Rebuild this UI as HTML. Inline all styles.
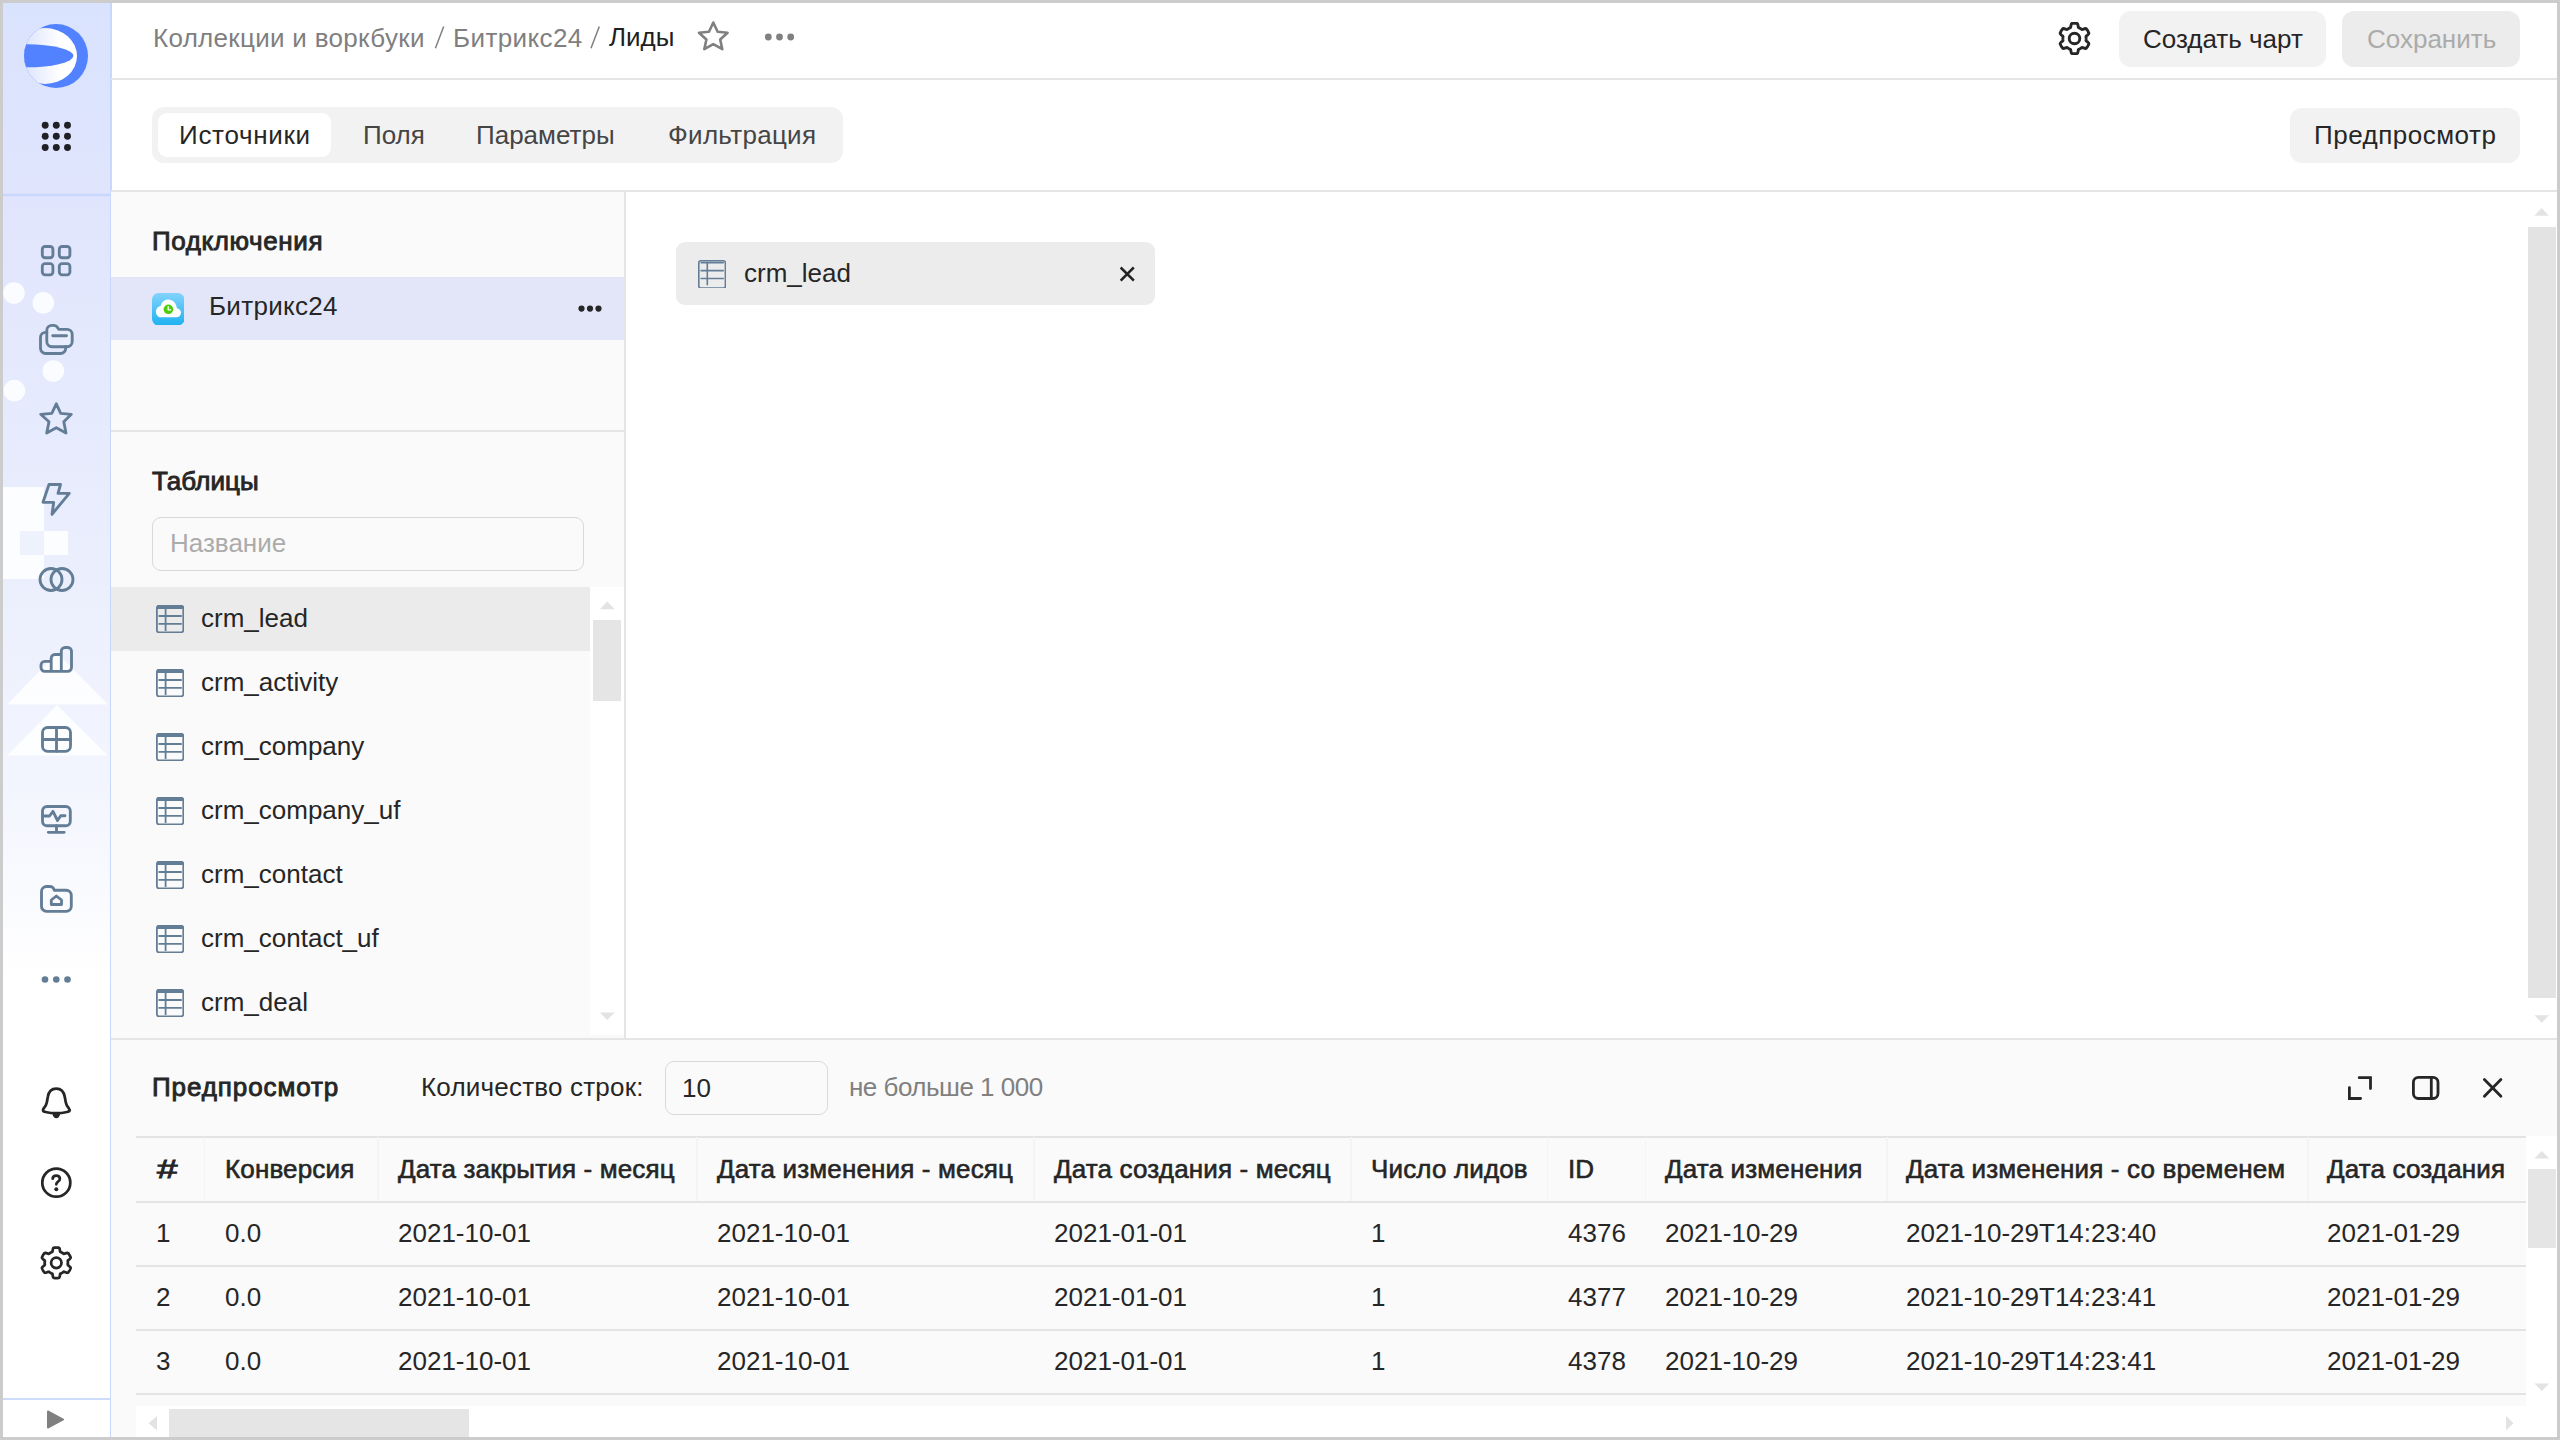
<!DOCTYPE html>
<html><head><meta charset="utf-8">
<style>
*{box-sizing:border-box;margin:0;padding:0}
html,body{width:2560px;height:1440px;overflow:hidden;background:#cccccc}
body{font-family:"Liberation Sans",sans-serif;font-size:26px;color:#262626;position:relative}
.a{position:absolute}
.t{position:absolute;line-height:30px;white-space:pre}
.b{-webkit-text-stroke:0.9px #262626}
.th{-webkit-text-stroke:0.6px #262626;letter-spacing:0.15px}
#app{position:absolute;left:3px;top:3px;width:2554px;height:1434px;background:#fff;overflow:hidden}
</style></head><body>
<div id="app"></div>

<!-- sidebar -->
<div class="a" id="side" style="left:3px;top:3px;width:109px;height:1434px;background:linear-gradient(180deg,#dae3fd 0px,#dde4fd 100px,#e0e5fd 190px,#e5eafd 400px,#ecf0fd 600px,#f3f5fe 780px,#f9fafe 880px,#ffffff 980px);border-right:2px solid #c8d8fc"></div>


<svg class="a" style="left:0;top:0" width="112" height="1440" viewBox="0 0 112 1440">
 <defs>
  <linearGradient id="lw" gradientUnits="userSpaceOnUse" x1="24" x2="60" y1="0" y2="0"><stop offset="0" stop-color="#dbe4fc"/><stop offset="1" stop-color="#ffffff"/></linearGradient>
  <clipPath id="lc"><circle cx="56" cy="56" r="32"/></clipPath>
 </defs>
 <!-- decorations -->
 <g fill="#ffffff" fill-opacity="0.85">
  <circle cx="14" cy="293" r="10.8"/><circle cx="43.3" cy="302.8" r="10.8"/>
  <circle cx="53.3" cy="371" r="10.8"/><circle cx="14.4" cy="390.6" r="10.8"/>
  <path d="M3 487H44V531H68V555H44V579H3Z"/>
  <path d="M7 704.5L57 653L108 704.5Z"/>
  <path d="M7 755.5L57 705L108 755.5Z"/>
 </g>
 <rect x="20" y="531" width="24" height="24" fill="#eef2fd"/>
 <!-- logo -->
 <line x1="3" y1="195" x2="110" y2="195" stroke="#c8d8fc" stroke-width="2.4"/>
 <circle cx="56" cy="56" r="32" fill="#5282ff"/>
 <g clip-path="url(#lc)">
  <ellipse cx="45" cy="56" rx="32" ry="28" fill="url(#lw)"/>
  <ellipse cx="27" cy="55.8" rx="46.4" ry="11.5" fill="#5282ff"/>
 </g>
 <!-- grid dots -->
 <g fill="#202124"><circle cx="45.2" cy="125.2" r="3.45"/><circle cx="56.3" cy="125.2" r="3.45"/><circle cx="67.5" cy="125.2" r="3.45"/><circle cx="45.2" cy="136.3" r="3.45"/><circle cx="56.3" cy="136.3" r="3.45"/><circle cx="67.5" cy="136.3" r="3.45"/><circle cx="45.2" cy="147.5" r="3.45"/><circle cx="56.3" cy="147.5" r="3.45"/><circle cx="67.5" cy="147.5" r="3.45"/></g>
 <g fill="none" stroke="#637d96" stroke-width="2.85" stroke-linejoin="round" stroke-linecap="round">
  <rect x="42.3" y="246.5" width="10.6" height="11.2" rx="2.8"/>
  <rect x="59.3" y="246.5" width="10.6" height="11.2" rx="2.8"/>
  <rect x="42.3" y="263.6" width="10.6" height="11.2" rx="2.8"/>
  <rect x="59.3" y="263.6" width="10.6" height="11.2" rx="2.8"/>
  <path d="M46.8 341.5V330.5A5.2 5.2 0 0 1 52 325.3H53.5C55 325.3 56.4 326 57.3 327.2L58.7 329.3H67A5.2 5.2 0 0 1 72.2 334.5V341.5A5.2 5.2 0 0 1 67 346.7H52A5.2 5.2 0 0 1 46.8 341.5Z" fill="#e8eefd"/>
  <path d="M52.7 335.7H66.5"/>
  <path d="M46.8 332.3H45.7A5.2 5.2 0 0 0 40.5 337.5V348.3A5.2 5.2 0 0 0 45.7 353.5H60.5A5.2 5.2 0 0 0 65.7 348.3V346.7"/>
  <path d="M56.3 403.8L60.7 413.3L71.3 414.3L63.8 421.7L66 433L56.3 427.7L46.7 433L49 421.7L40.7 414.3L51.8 413.3Z"/>
  <path d="M49 484.5H60.5L58 493.3H69.3L52 514.3L53.7 502.3H43Z"/>
  <circle cx="51" cy="579.5" r="11"/><circle cx="62" cy="579.5" r="11"/>
  <path d="M41 665A3.7 3.7 0 0 1 44.7 661.3H51.2V658.2A3.7 3.7 0 0 1 54.9 654.5H61.3V651.2A3.7 3.7 0 0 1 65 647.5H67.8A3.7 3.7 0 0 1 71.5 651.2V667.6A3.7 3.7 0 0 1 67.8 671.3H44.7A3.7 3.7 0 0 1 41 667.6Z M51.2 661.3V671.3 M61.3 654.5V671.3"/>
  <rect x="42.5" y="727.5" width="28" height="23.8" rx="5"/>
  <path d="M56.5 727.5V751.3M42.5 739.5H70.5"/>
  <rect x="42.5" y="806.5" width="27.8" height="19.2" rx="4.5"/>
  <path d="M56.5 825.7V832.3M48.3 832.3H64.2"/>
  <path d="M42.8 816H49.5L53 811.3L57.5 820.5L60.7 815.7H65"/>
  <path d="M41.5 906V891.5A5 5 0 0 1 46.5 886.5H50C51.5 886.5 52.7 887.2 53.5 888.3L54.3 890.2H66.3A5 5 0 0 1 71.3 895.2V906.3A5 5 0 0 1 66.3 911.3H46.5A5 5 0 0 1 41.5 906Z"/>
  <path d="M51.3 904.5V900L56.4 896L61.5 900V904.5Z"/>
 </g>
 <g fill="#637d96"><circle cx="45" cy="979.5" r="3.3"/><circle cx="56.3" cy="979.5" r="3.3"/><circle cx="67.5" cy="979.5" r="3.3"/></g>
 <g fill="none" stroke="#262626" stroke-width="2.75" stroke-linejoin="round" stroke-linecap="round">
  <path d="M56.3 1088.5C51.5 1088.5 48.5 1092 47.8 1097L46.8 1102.5C46.3 1105 45 1107 43.8 1108.3C42 1110.3 43 1111.5 45.5 1112C49 1112.8 52.5 1113.2 56.3 1113.2C60 1113.2 63.5 1112.8 67 1112C69.5 1111.5 70.5 1110.3 68.8 1108.3C67.6 1107 66.3 1105 65.8 1102.5L64.8 1097C64 1092 61 1088.5 56.3 1088.5Z"/>
  <circle cx="56.3" cy="1182.7" r="14"/>
  <path d="M52.7 1178.7C52.7 1176.7 54.3 1175.5 56.3 1175.5C58.3 1175.5 59.9 1176.8 59.9 1178.7C59.9 1180.3 58.9 1181 57.8 1181.8C56.8 1182.5 56.3 1183 56.3 1184.3"/>
  <path d="M56.30 1247.50 L56.83 1247.51 L57.37 1247.54 L57.90 1247.58 L58.43 1247.65 L58.95 1247.75 L59.39 1248.24 L59.70 1249.15 L59.90 1250.23 L60.07 1251.21 L60.29 1251.84 L60.65 1252.04 L61.02 1252.20 L61.39 1252.37 L61.75 1252.56 L62.10 1252.75 L62.45 1252.96 L62.79 1253.18 L63.12 1253.42 L63.44 1253.66 L63.80 1253.86 L64.45 1253.74 L65.38 1253.40 L66.42 1253.03 L67.36 1252.84 L68.01 1252.98 L68.36 1253.38 L68.68 1253.81 L68.98 1254.24 L69.28 1254.69 L69.55 1255.15 L69.81 1255.62 L70.05 1256.09 L70.28 1256.58 L70.49 1257.07 L70.66 1257.57 L70.46 1258.20 L69.82 1258.92 L68.99 1259.64 L68.22 1260.27 L67.79 1260.77 L67.79 1261.19 L67.84 1261.59 L67.87 1261.99 L67.89 1262.40 L67.90 1262.80 L67.89 1263.20 L67.87 1263.61 L67.84 1264.01 L67.79 1264.41 L67.79 1264.83 L68.22 1265.33 L68.99 1265.96 L69.82 1266.68 L70.46 1267.40 L70.66 1268.03 L70.49 1268.53 L70.28 1269.02 L70.05 1269.51 L69.81 1269.98 L69.55 1270.45 L69.28 1270.91 L68.98 1271.36 L68.68 1271.79 L68.36 1272.22 L68.01 1272.62 L67.36 1272.76 L66.42 1272.57 L65.38 1272.20 L64.45 1271.86 L63.80 1271.74 L63.44 1271.94 L63.12 1272.18 L62.79 1272.42 L62.45 1272.64 L62.10 1272.85 L61.75 1273.04 L61.39 1273.23 L61.02 1273.40 L60.65 1273.56 L60.29 1273.76 L60.07 1274.39 L59.90 1275.37 L59.70 1276.45 L59.39 1277.36 L58.95 1277.85 L58.43 1277.95 L57.90 1278.02 L57.37 1278.06 L56.83 1278.09 L56.30 1278.10 L55.77 1278.09 L55.23 1278.06 L54.70 1278.02 L54.17 1277.95 L53.65 1277.85 L53.21 1277.36 L52.90 1276.45 L52.70 1275.37 L52.53 1274.39 L52.31 1273.76 L51.95 1273.56 L51.58 1273.40 L51.21 1273.23 L50.85 1273.04 L50.50 1272.85 L50.15 1272.64 L49.81 1272.42 L49.48 1272.18 L49.16 1271.94 L48.80 1271.74 L48.15 1271.86 L47.22 1272.20 L46.18 1272.57 L45.24 1272.76 L44.59 1272.62 L44.24 1272.22 L43.92 1271.79 L43.62 1271.36 L43.32 1270.91 L43.05 1270.45 L42.79 1269.98 L42.55 1269.51 L42.32 1269.02 L42.11 1268.53 L41.94 1268.03 L42.14 1267.40 L42.78 1266.68 L43.61 1265.96 L44.38 1265.33 L44.81 1264.83 L44.81 1264.41 L44.76 1264.01 L44.73 1263.61 L44.71 1263.20 L44.70 1262.80 L44.71 1262.40 L44.73 1261.99 L44.76 1261.59 L44.81 1261.19 L44.81 1260.77 L44.38 1260.27 L43.61 1259.64 L42.78 1258.92 L42.14 1258.20 L41.94 1257.57 L42.11 1257.07 L42.32 1256.58 L42.55 1256.09 L42.79 1255.62 L43.05 1255.15 L43.32 1254.69 L43.62 1254.24 L43.92 1253.81 L44.24 1253.38 L44.59 1252.98 L45.24 1252.84 L46.18 1253.03 L47.22 1253.40 L48.15 1253.74 L48.80 1253.86 L49.16 1253.66 L49.48 1253.42 L49.81 1253.18 L50.15 1252.96 L50.50 1252.75 L50.85 1252.56 L51.21 1252.37 L51.58 1252.20 L51.95 1252.04 L52.31 1251.84 L52.53 1251.21 L52.70 1250.23 L52.90 1249.15 L53.21 1248.24 L53.65 1247.75 L54.17 1247.65 L54.70 1247.58 L55.23 1247.54 L55.77 1247.51Z"/>
  <circle cx="56.3" cy="1262.8" r="5.2"/>
 </g>
 <path d="M52.3 1113.5H60.3C59.8 1116.5 58.3 1118.2 56.3 1118.2C54.3 1118.2 52.8 1116.5 52.3 1113.5Z" fill="#262626"/>
 <circle cx="56.3" cy="1189.3" r="2" fill="#262626"/>
 <line x1="3" y1="1399" x2="111" y2="1399" stroke="#cddcfb" stroke-width="2"/>
 <path d="M47 1411.5V1427.5C47 1428.3 47.6 1428.7 48.3 1428.4L63.6 1420.3C64.3 1419.9 64.3 1419.1 63.6 1418.7L48.3 1410.6C47.6 1410.3 47 1410.7 47 1411.5Z" fill="#808080"/>
</svg>

<!-- header -->
<div class="a" style="left:111px;top:78px;width:2446px;height:2px;background:#e5e5e5"></div>
<div class="t" style="left:153px;top:23px;color:#7f7f7f;letter-spacing:0.3px">Коллекции и воркбуки</div>
<svg class="a" style="left:420px;top:20px" width="200" height="34" viewBox="420 20 200 34"><path d="M443.7 26.6L435.4 48.2M599.3 26.6L591 48.2" stroke="#7f7f7f" stroke-width="1.5"/></svg>
<div class="t" style="left:453px;top:23px;color:#7f7f7f;letter-spacing:0.4px">Битрикс24</div>

<div class="t" style="left:609px;top:22px;color:#1f1f1f">Лиды</div>

<div class="a" style="left:2119px;top:11px;width:207px;height:56px;border-radius:12px;background:#f2f2f2"></div>
<div class="t" style="left:2143px;top:24px">Создать чарт</div>
<div class="a" style="left:2342px;top:11px;width:178px;height:56px;border-radius:12px;background:#ececec"></div>
<div class="t" style="left:2367px;top:24px;color:#ababab">Сохранить</div>


<svg class="a" style="left:690px;top:14px" width="110" height="46" viewBox="690 14 110 46">
 <path d="M713.3 22.5L717.6 31.8L727.6 32.7L720.2 39.5L722.3 49.2L713.3 44.2L704.3 49.2L706.4 39.5L699 32.7L709 31.8Z" fill="none" stroke="#808080" stroke-width="2.6" stroke-linejoin="round"/>
 <circle cx="768.3" cy="37" r="3.4" fill="#808080"/><circle cx="779.5" cy="37" r="3.4" fill="#808080"/><circle cx="790.7" cy="37" r="3.4" fill="#808080"/>
</svg>
<svg class="a" style="left:2057.5px;top:22.3px" width="33" height="33" viewBox="0 0 33 33">
 <path d="M16.50 1.20 L17.03 1.21 L17.57 1.24 L18.10 1.28 L18.63 1.35 L19.15 1.45 L19.59 1.94 L19.90 2.85 L20.10 3.93 L20.27 4.91 L20.49 5.54 L20.85 5.74 L21.22 5.90 L21.59 6.07 L21.95 6.26 L22.30 6.45 L22.65 6.66 L22.99 6.88 L23.32 7.12 L23.64 7.36 L24.00 7.56 L24.65 7.44 L25.58 7.10 L26.62 6.73 L27.56 6.54 L28.21 6.68 L28.56 7.08 L28.88 7.51 L29.18 7.94 L29.48 8.39 L29.75 8.85 L30.01 9.32 L30.25 9.79 L30.48 10.28 L30.69 10.77 L30.86 11.27 L30.66 11.90 L30.02 12.62 L29.19 13.34 L28.42 13.97 L27.99 14.47 L27.99 14.89 L28.04 15.29 L28.07 15.69 L28.09 16.10 L28.10 16.50 L28.09 16.90 L28.07 17.31 L28.04 17.71 L27.99 18.11 L27.99 18.53 L28.42 19.03 L29.19 19.66 L30.02 20.38 L30.66 21.10 L30.86 21.73 L30.69 22.23 L30.48 22.72 L30.25 23.21 L30.01 23.68 L29.75 24.15 L29.48 24.61 L29.18 25.06 L28.88 25.49 L28.56 25.92 L28.21 26.32 L27.56 26.46 L26.62 26.27 L25.58 25.90 L24.65 25.56 L24.00 25.44 L23.64 25.64 L23.32 25.88 L22.99 26.12 L22.65 26.34 L22.30 26.55 L21.95 26.74 L21.59 26.93 L21.22 27.10 L20.85 27.26 L20.49 27.46 L20.27 28.09 L20.10 29.07 L19.90 30.15 L19.59 31.06 L19.15 31.55 L18.63 31.65 L18.10 31.72 L17.57 31.76 L17.03 31.79 L16.50 31.80 L15.97 31.79 L15.43 31.76 L14.90 31.72 L14.37 31.65 L13.85 31.55 L13.41 31.06 L13.10 30.15 L12.90 29.07 L12.73 28.09 L12.51 27.46 L12.15 27.26 L11.78 27.10 L11.41 26.93 L11.05 26.74 L10.70 26.55 L10.35 26.34 L10.01 26.12 L9.68 25.88 L9.36 25.64 L9.00 25.44 L8.35 25.56 L7.42 25.90 L6.38 26.27 L5.44 26.46 L4.79 26.32 L4.44 25.92 L4.12 25.49 L3.82 25.06 L3.52 24.61 L3.25 24.15 L2.99 23.68 L2.75 23.21 L2.52 22.72 L2.31 22.23 L2.14 21.73 L2.34 21.10 L2.98 20.38 L3.81 19.66 L4.58 19.03 L5.01 18.53 L5.01 18.11 L4.96 17.71 L4.93 17.31 L4.91 16.90 L4.90 16.50 L4.91 16.10 L4.93 15.69 L4.96 15.29 L5.01 14.89 L5.01 14.47 L4.58 13.97 L3.81 13.34 L2.98 12.62 L2.34 11.90 L2.14 11.27 L2.31 10.77 L2.52 10.28 L2.75 9.79 L2.99 9.32 L3.25 8.85 L3.52 8.39 L3.82 7.94 L4.12 7.51 L4.44 7.08 L4.79 6.68 L5.44 6.54 L6.38 6.73 L7.42 7.10 L8.35 7.44 L9.00 7.56 L9.36 7.36 L9.68 7.12 L10.01 6.88 L10.35 6.66 L10.70 6.45 L11.05 6.26 L11.41 6.07 L11.78 5.90 L12.15 5.74 L12.51 5.54 L12.73 4.91 L12.90 3.93 L13.10 2.85 L13.41 1.94 L13.85 1.45 L14.37 1.35 L14.90 1.28 L15.43 1.24 L15.97 1.21Z" fill="none" stroke="#262626" stroke-width="2.9" stroke-linejoin="round"/>
 <circle cx="16.5" cy="16.5" r="5.3" fill="none" stroke="#262626" stroke-width="2.9"/>
</svg>

<!-- tabs -->
<div class="a" style="left:111px;top:190px;width:2446px;height:2px;background:#e5e5e5"></div>
<div class="a" style="left:152px;top:107px;width:691px;height:56px;border-radius:12px;background:#f2f2f2"></div>
<div class="a" style="left:158px;top:113px;width:173px;height:44px;border-radius:9px;background:#fff"></div>
<div class="t" style="left:179px;top:120px;letter-spacing:0.7px">Источники</div>
<div class="t" style="left:363px;top:120px;color:#454545">Поля</div>
<div class="t" style="left:476px;top:120px;color:#454545">Параметры</div>
<div class="t" style="left:668px;top:120px;color:#454545;letter-spacing:0.3px">Фильтрация</div>
<div class="a" style="left:2290px;top:108px;width:230px;height:55px;border-radius:12px;background:#f2f2f2"></div>
<div class="t" style="left:2314px;top:120px;letter-spacing:0.5px">Предпросмотр</div>

<!-- left panel -->
<div class="a" style="left:111px;top:192px;width:515px;height:847px;background:#fafafa;border-right:2px solid #e5e5e5"></div>
<div class="t b" style="left:152px;top:226px;letter-spacing:0.6px">Подключения</div>
<div class="a" style="left:111px;top:277px;width:513px;height:63px;background:#e2e6f8"></div>
<div class="t" style="left:209px;top:291px;letter-spacing:0.3px">Битрикс24</div>
<svg class="a" style="left:152px;top:292.5px" width="32.4" height="32.4" viewBox="0 0 32.4 32.4">
 <defs><linearGradient id="bx" x1="0" y1="0" x2="0" y2="1"><stop offset="0" stop-color="#82d3fb"/><stop offset="1" stop-color="#1fb2f2"/></linearGradient></defs>
 <rect x="0" y="0" width="32.4" height="32.4" rx="6.5" fill="url(#bx)"/>
 <path d="M9 24.3H24.5C27 24.3 29 22.3 29 19.8C29 17.4 27.2 15.5 24.9 15.3C24.4 10.3 20.8 6.5 16.4 6.5C12.6 6.5 9.5 9.2 8.6 13C5.9 13.4 4 15.9 4 19C4 21.9 6.2 24.3 9 24.3Z" fill="#fff"/>
 <circle cx="16.4" cy="16.3" r="4.8" fill="#4fcd0c"/>
 <path d="M16.2 13.6V16.8H18.6" fill="none" stroke="#fff" stroke-width="1.3" stroke-linecap="round"/>
</svg>
<svg class="a" style="left:576px;top:302px" width="28" height="12" viewBox="576 302 28 12">
 <circle cx="581.5" cy="308.6" r="3.1" fill="#262626"/><circle cx="590" cy="308.6" r="3.1" fill="#262626"/><circle cx="598.5" cy="308.6" r="3.1" fill="#262626"/>
</svg>

<div class="a" style="left:111px;top:430px;width:513px;height:2px;background:#e5e5e5"></div>
<div class="t b" style="left:152px;top:466px;letter-spacing:0.1px">Таблицы</div>
<div class="a" style="left:152px;top:517px;width:432px;height:54px;border-radius:9px;border:1.5px solid #d9d9d9;background:#fafafa"></div>
<div class="t" style="left:170px;top:528px;color:#ababab">Название</div>
<div class="a" style="left:111px;top:587px;width:479px;height:64px;background:#ebebeb"></div>
<div class="a" style="left:590px;top:587px;width:34px;height:448px;background:#fff"></div>
<div class="a" style="left:593px;top:620px;width:28px;height:81px;background:#e5e5e5"></div>

<svg class="a" style="left:155.7px;top:605px" width="28" height="28" viewBox="0 0 28 28"><g fill="none" stroke="#637d96" stroke-width="1.8"><rect x="0.9" y="0.9" width="26.4" height="26.4" rx="2"/><path d="M2.5 11H25.8M2.5 18.9H25.8M9.6 3V26"/></g><rect x="1" y="0.3" width="26.2" height="3.6" rx="1" fill="#637d96"/></svg>
<div class="t" style="left:201px;top:603px">crm_lead</div>
<svg class="a" style="left:155.7px;top:669px" width="28" height="28" viewBox="0 0 28 28"><g fill="none" stroke="#637d96" stroke-width="1.8"><rect x="0.9" y="0.9" width="26.4" height="26.4" rx="2"/><path d="M2.5 11H25.8M2.5 18.9H25.8M9.6 3V26"/></g><rect x="1" y="0.3" width="26.2" height="3.6" rx="1" fill="#637d96"/></svg>
<div class="t" style="left:201px;top:667px">crm_activity</div>
<svg class="a" style="left:155.7px;top:733px" width="28" height="28" viewBox="0 0 28 28"><g fill="none" stroke="#637d96" stroke-width="1.8"><rect x="0.9" y="0.9" width="26.4" height="26.4" rx="2"/><path d="M2.5 11H25.8M2.5 18.9H25.8M9.6 3V26"/></g><rect x="1" y="0.3" width="26.2" height="3.6" rx="1" fill="#637d96"/></svg>
<div class="t" style="left:201px;top:731px">crm_company</div>
<svg class="a" style="left:155.7px;top:797px" width="28" height="28" viewBox="0 0 28 28"><g fill="none" stroke="#637d96" stroke-width="1.8"><rect x="0.9" y="0.9" width="26.4" height="26.4" rx="2"/><path d="M2.5 11H25.8M2.5 18.9H25.8M9.6 3V26"/></g><rect x="1" y="0.3" width="26.2" height="3.6" rx="1" fill="#637d96"/></svg>
<div class="t" style="left:201px;top:795px">crm_company_uf</div>
<svg class="a" style="left:155.7px;top:861px" width="28" height="28" viewBox="0 0 28 28"><g fill="none" stroke="#637d96" stroke-width="1.8"><rect x="0.9" y="0.9" width="26.4" height="26.4" rx="2"/><path d="M2.5 11H25.8M2.5 18.9H25.8M9.6 3V26"/></g><rect x="1" y="0.3" width="26.2" height="3.6" rx="1" fill="#637d96"/></svg>
<div class="t" style="left:201px;top:859px">crm_contact</div>
<svg class="a" style="left:155.7px;top:925px" width="28" height="28" viewBox="0 0 28 28"><g fill="none" stroke="#637d96" stroke-width="1.8"><rect x="0.9" y="0.9" width="26.4" height="26.4" rx="2"/><path d="M2.5 11H25.8M2.5 18.9H25.8M9.6 3V26"/></g><rect x="1" y="0.3" width="26.2" height="3.6" rx="1" fill="#637d96"/></svg>
<div class="t" style="left:201px;top:923px">crm_contact_uf</div>
<svg class="a" style="left:155.7px;top:989px" width="28" height="28" viewBox="0 0 28 28"><g fill="none" stroke="#637d96" stroke-width="1.8"><rect x="0.9" y="0.9" width="26.4" height="26.4" rx="2"/><path d="M2.5 11H25.8M2.5 18.9H25.8M9.6 3V26"/></g><rect x="1" y="0.3" width="26.2" height="3.6" rx="1" fill="#637d96"/></svg>
<div class="t" style="left:201px;top:987px">crm_deal</div>

<!-- right panel -->
<div class="a" style="left:676px;top:242px;width:479px;height:63px;border-radius:9px;background:#ececec"></div>
<div class="t" style="left:744px;top:258px">crm_lead</div>
<svg class="a" style="left:698px;top:259.5px" width="28" height="28" viewBox="0 0 28 28"><g fill="none" stroke="#637d96" stroke-width="1.6"><rect x="0.8" y="0.8" width="26.6" height="27.2" rx="2"/><path d="M2.5 2.6H25.8M2.5 10.6H25.8M2.5 18.5H25.8M9.3 2.6V25.2"/></g></svg>
<svg class="a" style="left:1116px;top:263px" width="22" height="22" viewBox="0 0 22 22"><path d="M5.6 5.4L16.9 16.7M16.9 5.4L5.6 16.7" stroke="#222" stroke-width="2.6" stroke-linecap="square"/></svg>


<!-- preview -->
<div class="a" style="left:111px;top:1038px;width:2446px;height:399px;background:#fafafa;border-top:2px solid #e5e5e5"></div>
<div class="t b" style="left:152px;top:1072px;letter-spacing:0.9px">Предпросмотр</div>
<div class="t" style="left:421px;top:1072px;letter-spacing:0.2px">Количество строк:</div>
<div class="a" style="left:665px;top:1061px;width:163px;height:54px;border-radius:9px;border:1.5px solid #d9d9d9"></div>
<div class="t" style="left:682px;top:1073px">10</div>
<div class="t" style="left:849px;top:1072px;color:#808080;letter-spacing:-0.5px">не больше 1 000</div>


<div class="a" style="left:136px;top:1136px;width:2390px;height:270px;background:#fafafa"></div>
<div class="a" style="left:136px;top:1136px;width:2390px;height:1.5px;background:#e3e3e3"></div>
<div class="a" style="left:203.5px;top:1137px;width:1.5px;height:65px;background:#f4f4f4"></div><div class="a" style="left:377px;top:1137px;width:1.5px;height:65px;background:#f4f4f4"></div><div class="a" style="left:696px;top:1137px;width:1.5px;height:65px;background:#f4f4f4"></div><div class="a" style="left:1033px;top:1137px;width:1.5px;height:65px;background:#f4f4f4"></div><div class="a" style="left:1350px;top:1137px;width:1.5px;height:65px;background:#f4f4f4"></div><div class="a" style="left:1546.5px;top:1137px;width:1.5px;height:65px;background:#f4f4f4"></div><div class="a" style="left:1644.5px;top:1137px;width:1.5px;height:65px;background:#f4f4f4"></div><div class="a" style="left:1886px;top:1137px;width:1.5px;height:65px;background:#f4f4f4"></div><div class="a" style="left:2307px;top:1137px;width:1.5px;height:65px;background:#f4f4f4"></div>
<div class="a" style="left:136px;top:1201.4px;width:2390px;height:1.6px;background:#e4e4e4"></div>
<div class="a" style="left:136px;top:1265.4px;width:2390px;height:1.6px;background:#e4e4e4"></div>
<div class="a" style="left:136px;top:1329.4px;width:2390px;height:1.6px;background:#e4e4e4"></div>
<div class="a" style="left:136px;top:1393.4px;width:2390px;height:1.6px;background:#e4e4e4"></div>
<div class="a" style="left:2526px;top:1136px;width:31px;height:301px;background:#fff"></div>
<div class="a" style="left:136px;top:1406px;width:2390px;height:31px;background:#fff"></div>
<div class="a" style="left:169px;top:1409px;width:300px;height:28px;background:#e5e5e5"></div>
<div class="a" style="left:2528px;top:1169px;width:28px;height:79px;background:#e5e5e5"></div>
<div class="t th" style="left:157px;top:1154px;font-size:26px;-webkit-text-stroke:0.9px #262626;transform:scaleX(1.42);transform-origin:0 0">#</div>
<div class="t th" style="left:225px;top:1154px">Конверсия</div>
<div class="t th" style="left:398px;top:1154px">Дата закрытия - месяц</div>
<div class="t th" style="left:717px;top:1154px">Дата изменения - месяц</div>
<div class="t th" style="left:1054px;top:1154px">Дата создания - месяц</div>
<div class="t th" style="left:1371px;top:1154px">Число лидов</div>
<div class="t th" style="left:1568px;top:1154px">ID</div>
<div class="t th" style="left:1665px;top:1154px">Дата изменения</div>
<div class="t th" style="left:1906px;top:1154px">Дата изменения - со временем</div>
<div class="t th" style="left:2327px;top:1154px">Дата создания</div>
<div class="t" style="left:156px;top:1218px">1</div>
<div class="t" style="left:225px;top:1218px">0.0</div>
<div class="t" style="left:398px;top:1218px">2021-10-01</div>
<div class="t" style="left:717px;top:1218px">2021-10-01</div>
<div class="t" style="left:1054px;top:1218px">2021-01-01</div>
<div class="t" style="left:1371px;top:1218px">1</div>
<div class="t" style="left:1568px;top:1218px">4376</div>
<div class="t" style="left:1665px;top:1218px">2021-10-29</div>
<div class="t" style="left:1906px;top:1218px">2021-10-29T14:23:40</div>
<div class="t" style="left:2327px;top:1218px">2021-01-29</div>
<div class="t" style="left:156px;top:1282px">2</div>
<div class="t" style="left:225px;top:1282px">0.0</div>
<div class="t" style="left:398px;top:1282px">2021-10-01</div>
<div class="t" style="left:717px;top:1282px">2021-10-01</div>
<div class="t" style="left:1054px;top:1282px">2021-01-01</div>
<div class="t" style="left:1371px;top:1282px">1</div>
<div class="t" style="left:1568px;top:1282px">4377</div>
<div class="t" style="left:1665px;top:1282px">2021-10-29</div>
<div class="t" style="left:1906px;top:1282px">2021-10-29T14:23:41</div>
<div class="t" style="left:2327px;top:1282px">2021-01-29</div>
<div class="t" style="left:156px;top:1346px">3</div>
<div class="t" style="left:225px;top:1346px">0.0</div>
<div class="t" style="left:398px;top:1346px">2021-10-01</div>
<div class="t" style="left:717px;top:1346px">2021-10-01</div>
<div class="t" style="left:1054px;top:1346px">2021-01-01</div>
<div class="t" style="left:1371px;top:1346px">1</div>
<div class="t" style="left:1568px;top:1346px">4378</div>
<div class="t" style="left:1665px;top:1346px">2021-10-29</div>
<div class="t" style="left:1906px;top:1346px">2021-10-29T14:23:41</div>
<div class="t" style="left:2327px;top:1346px">2021-01-29</div>

<!-- scrollbars -->
<svg class="a" style="left:0;top:0" width="2560" height="1440" viewBox="0 0 2560 1440">
 <g fill="#e3e3e3">
  <path d="M599.9 609.2L607.2 601.6L614.8 609.2Z"/>
  <path d="M599.9 1012.5L607.2 1020L614.8 1012.5Z"/>
  <path d="M2534.3 215.8L2541.6 208L2548.9 215.8Z"/>
  <path d="M2534.4 1015.2L2541.8 1022.8L2549.2 1015.2Z"/>
  <rect x="2528" y="227" width="28" height="771"/>
  <path d="M2534.4 1158.5L2541.8 1151L2549.2 1158.5Z"/>
  <path d="M2534.4 1383.5L2541.8 1391L2549.2 1383.5Z"/>
  <path d="M157 1416L148.5 1423.3L157 1430.6Z"/>
  <path d="M2506 1416L2513.5 1423.3L2506 1430.6Z"/>
 </g>
 <g fill="none" stroke="#262626" stroke-width="2.8" stroke-linecap="round">
  <path d="M2359.2 1077.7H2370.5V1088.6M2349.4 1087.6V1098.5H2360.6"/>
  <rect x="2413.4" y="1077.4" width="24.6" height="21.1" rx="5"/>
  <path d="M2431.3 1077.4V1098.5"/>
  <path d="M2484.4 1079.6L2500.9 1096.3M2500.9 1079.6L2484.4 1096.3"/>
 </g>
</svg>

</body></html>
